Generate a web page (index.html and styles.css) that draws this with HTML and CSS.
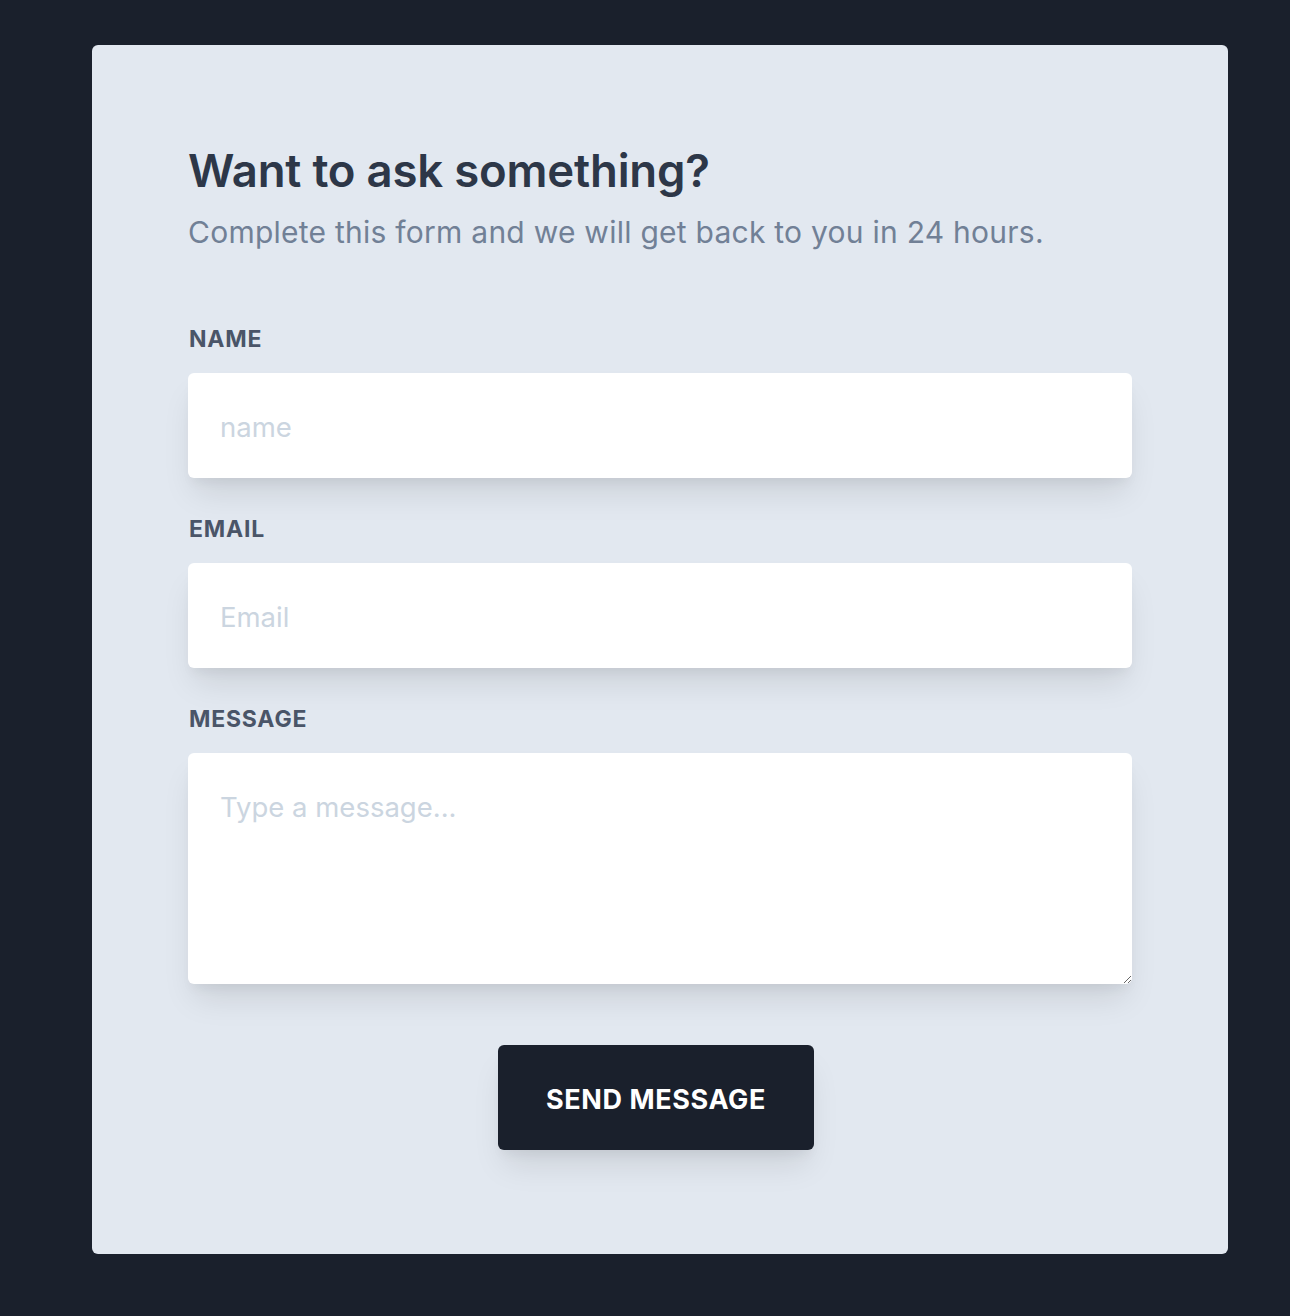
FILE: index.html
```html
<!DOCTYPE html>
<html lang="en">
<head>
<meta charset="utf-8">
<title>Contact</title>
<link rel="stylesheet" href="styles.css">
</head>
<body>
<main class="card">
  <h1 class="title">Want to ask something?</h1>
  <p class="subtitle">Complete this form and we will get back to you in 24 hours.</p>
  <form class="form">
    <div class="field">
      <label class="label" for="name">Name</label>
      <input class="input" id="name" type="text" placeholder="name">
    </div>
    <div class="field">
      <label class="label" for="email">Email</label>
      <input class="input" id="email" type="email" placeholder="Email">
    </div>
    <div class="field">
      <label class="label" for="message">Message</label>
      <textarea class="input textarea" id="message" placeholder="Type a message..."></textarea>
    </div>
    <div class="actions">
      <button class="button" type="button">Send Message</button>
    </div>
  </form>
</main>
</body>
</html>
```
FILE: styles.css
```css
* { box-sizing: border-box; }
html, body { margin: 0; }
body {
  background: #1a202c;
  padding: 45px 62px 62px 92px;
  font-family: Inter, "Noto Sans", sans-serif;
  min-height: 1316px;
}
.card {
  width: 1136px;
  background: #e2e8f0;
  border-radius: 6px;
  padding: 97px 96px 104px 96px;
}
.title {
  margin: 0;
  font-size: 45.5px;
  line-height: 57.5px;
  font-weight: 600;
  color: #2d3748;
  letter-spacing: -0.2px;
}
.subtitle {
  margin: 11px 0 0 0;
  font-size: 30px;
  line-height: 43.5px;
  color: #718096;
  font-weight: 400;
  letter-spacing: 0.25px;
}
.form {
  margin-top: 68px;
  display: flex;
  flex-direction: column;
  gap: 34px;
}
.field { display: flex; flex-direction: column; }
.label {
  font-size: 23px;
  line-height: 32px;
  padding-top: 1px;
  font-weight: 700;
  text-transform: uppercase;
  letter-spacing: 0.8px;
  color: #4a5568;
  margin-bottom: 18px;
  padding-left: 1px;
}
.input {
  width: 100%;
  height: 105px;
  border: none;
  border-radius: 6px;
  background: #fff;
  padding: 2px 32px 0 32px;
  font-family: inherit;
  font-size: 27.5px;
  color: #2d3748;
  box-shadow: 0 20px 30px -6px rgba(0,0,0,0.1), 0 8px 12px -4px rgba(0,0,0,0.05);
  outline: none;
}
.input::placeholder { color: #cbd5e0; opacity: 1; }
.textarea {
  height: 231px;
  padding: 34px 32px 32px 32px;
  line-height: 41px;
  resize: vertical;
  display: block;
}
.actions {
  display: flex;
  justify-content: center;
  margin-top: 27px;
  padding-right: 8px;
}
.button {
  height: 105px;
  padding: 3px 48px 0 48px;
  border: none;
  border-radius: 6px;
  background: #1a202c;
  color: #fff;
  font-family: inherit;
  font-size: 27px;
  font-weight: 700;
  text-transform: uppercase;
  letter-spacing: 0.6px;
  box-shadow: 0 20px 30px -6px rgba(0,0,0,0.1), 0 8px 12px -4px rgba(0,0,0,0.05);
  cursor: pointer;
}
```
